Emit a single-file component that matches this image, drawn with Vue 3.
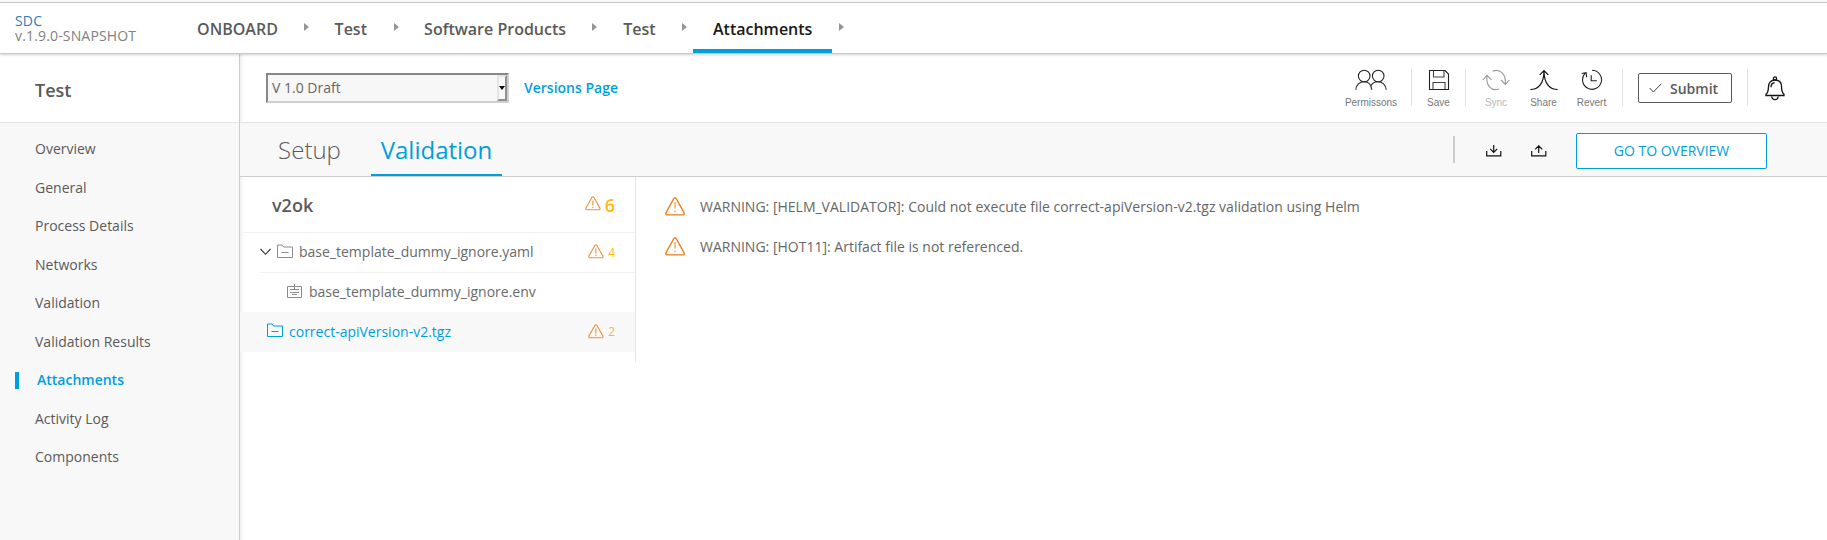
<script setup>
const crumbs = [
  { label: 'ONBOARD', w: 119 },
  { label: 'Test', w: 72 },
  { label: 'Software Products', w: 181 },
  { label: 'Test', w: 72 },
  { label: 'Attachments', w: 139, active: true },
]
const menu = ['Overview', 'General', 'Process Details', 'Networks', 'Validation', 'Validation Results', 'Attachments', 'Activity Log', 'Components']
const warnings = [
  'WARNING: [HELM_VALIDATOR]: Could not execute file correct-apiVersion-v2.tgz validation using Helm',
  'WARNING: [HOT11]: Artifact file is not referenced.',
]
</script>

<template>
  <div class="page">
    <header class="top">
      <div class="brand">
        <a>SDC</a>
        <span>v.1.9.0-SNAPSHOT</span>
      </div>
      <nav class="crumbs">
        <template v-for="(c, i) in crumbs" :key="i">
          <div class="crumb" :class="{ active: c.active }" :style="{ width: c.w + 'px' }">{{ c.label }}</div>
          <i class="sep-arrow"></i>
        </template>
      </nav>
    </header>

    <div class="body">
      <aside class="side">
        <h1>Test</h1>
        <ul>
          <li v-for="m in menu" :key="m" :class="{ active: m === 'Attachments' }">{{ m }}</li>
        </ul>
      </aside>

      <main class="main">
        <div class="toolbar">
          <div class="select"><span>V 1.0 Draft</span><b class="drop"><i></i></b></div>
          <a class="versions">Versions Page</a>
          <div class="actions">
            <div class="act perm">
              <svg width="32" height="22" viewBox="0 0 32 22"><g fill="none" stroke="#222" stroke-width="1.1"><circle cx="9.2" cy="7" r="5.8" /><circle cx="23.2" cy="7" r="5.8" /><path d="M.8 20.800c.3-5 3.900-8 8.200-8s7.400 3 7.700 8M16 16.500c1.500-2.400 4-3.700 7-3.700 4.300 0 7.900 3 8.200 8" /></g></svg>
              <span>Permissons</span>
            </div>
            <i class="line"></i>
            <div class="act save">
              <svg width="22" height="22" viewBox="0 0 22 22"><g fill="none" stroke="#222" stroke-width="1.1"><path d="M1.500 1.500h15.500l3.500 3.500v15.500h-19z" /><path d="M5.500 1.500v6.500h10.500v-6.500M5 20.500v-7h12v7" stroke="#444" /></g></svg>
              <span>Save</span>
            </div>
            <i class="line"></i>
            <div class="act sync">
              <svg width="28" height="22" viewBox="0 0 28 22"><g fill="none" stroke="#999" stroke-width="1.100"><path d="M10.500 2.200C18 -.8 24 5 23.400 15M19 11l4.300 4.500 4-4.500M17 20C9.500 22.500 3.700 17 5 6.500M.8 11L5 6.300l4.500 4.500" /></g></svg>
              <span>Sync</span>
            </div>
            <div class="act share">
              <svg width="28" height="22" viewBox="0 0 28 22"><g fill="none" stroke="#111" stroke-width="1.200"><path d="M.3 20.500C8 20.500 14 15 14 1.800M27.700 20.500C20 20.500 14 15 14 1.800M9.800 5.800L14 1.500l4.200 4.300" /></g></svg>
              <span>Share</span>
            </div>
            <div class="act revert">
              <svg width="22" height="22" viewBox="0 0 22 22"><g fill="none" stroke="#222" stroke-width="1.100"><path d="M11 1.300a9.500 9.500 0 1 1-6.800 2.900M.8 4.500l4.300-.9.500 4.700M10.200 6.200v5.600h5.600" /></g></svg>
              <span>Revert</span>
            </div>
            <i class="line l3"></i>
            <button class="submit">
              <svg width="13" height="10" viewBox="0 0 13 10"><path d="M.6 5l3.800 4L12.300.7" fill="none" stroke="#444" stroke-width="1" /></svg>
              Submit
            </button>
            <i class="line l4"></i>
            <svg class="bell" width="20" height="25" viewBox="0 0 20 25"><g fill="none" stroke="#111" stroke-width="1.300"><path d="M1 18.200c2-1.600 2.400-3.300 2.400-7C3.400 6.500 6 4 10 4s6.600 2.500 6.600 7.200c0 3.700.4 5.400 2.400 7v1.300H1z" /><circle cx="10" cy="2.500" r="1.600" /><path d="M6.700 20.500c.3 2 1.500 3.200 3.300 3.200s3-1.200 3.300-3.200M6 11.200c0-2.500 1.300-4.200 3.600-4.500" /></g></svg>
          </div>
        </div>

        <div class="tabs">
          <div class="tab setup">Setup</div>
          <div class="tab valid">Validation</div>
          <div class="tabtools">
            <i class="bar"></i>
            <svg class="dl" width="16" height="12" viewBox="0 0 16 12"><g fill="none" stroke="#111" stroke-width="1.200"><path d="M.7 6v4.900h14.100V6M7.700 0v7.200M4.200 3.900l3.500 3.500 3.500-3.500" /></g></svg>
            <svg class="ul" width="16" height="12" viewBox="0 0 16 12"><g fill="none" stroke="#111" stroke-width="1.200"><path d="M.7 6v4.900h14.100V6M7.700 8V.9M4.200 4.300L7.700.8l3.500 3.500" /></g></svg>
            <button class="go">GO TO OVERVIEW</button>
          </div>
        </div>

        <div class="content">
          <section class="tree">
            <div class="row head">
              <strong>v2ok</strong>
              <div class="count">
                <svg width="16" height="15" viewBox="0 0 16 15"><g fill="none" stroke="#ee8f35" stroke-width="1.100"><path d="M7 1.300q.9-1 1.800 0l6.200 11q.3 1.200-.9 1.400H1.700Q.5 13.500.8 12.300zM7.900 4.500v5M7.900 10.800v1.200" /></g></svg>
                <b>6</b>
              </div>
            </div>
            <div class="row file parent">
              <svg class="chev" width="11" height="8" viewBox="0 0 11 8"><path d="M.5 1l5 5.300 5-5.300" fill="none" stroke="#333" stroke-width="1.100" /></svg>
              <svg class="ic" width="16" height="14" viewBox="0 0 16 14"><path d="M.5 13.500V1h4.700l1.400 2h8.900v10.500zM4.500 8.500h7" fill="none" stroke="#8c8c8c" /></svg>
              <span>base_template_dummy_ignore.yaml</span>
              <div class="count">
                <svg width="16" height="15" viewBox="0 0 16 15"><g fill="none" stroke="#ee8f35" stroke-width="1.100"><path d="M7 1.300q.9-1 1.800 0l6.200 11q.3 1.200-.9 1.400H1.700Q.5 13.500.8 12.300zM7.900 4.500v5M7.900 10.800v1.200" /></g></svg>
                <em>4</em>
              </div>
            </div>
            <div class="row file child">
              <svg class="ic" width="16" height="14" viewBox="0 0 16 14"><path d="M.5 2.500h14v11H.5zM7.500 0v5M3 5.500h9M3 8.500h9M5 10.500h5" fill="none" stroke="#8c8c8c" /></svg>
              <span>base_template_dummy_ignore.env</span>
            </div>
            <div class="row file selected">
              <svg class="ic" width="16" height="14" viewBox="0 0 16 14"><path d="M.5 13.500V1h4.700l1.400 2h8.900v10.500zM4.500 8.500h7" fill="none" stroke="#009fdb" /></svg>
              <span>correct-apiVersion-v2.tgz</span>
              <div class="count">
                <svg width="16" height="15" viewBox="0 0 16 15"><g fill="none" stroke="#ee8f35" stroke-width="1.100"><path d="M7 1.300q.9-1 1.800 0l6.200 11q.3 1.200-.9 1.400H1.700Q.5 13.500.8 12.300zM7.900 4.500v5M7.900 10.800v1.200" /></g></svg>
                <em>2</em>
              </div>
            </div>
          </section>
          <section class="warns">
            <div v-for="w in warnings" :key="w" class="warn">
              <svg width="20" height="19" viewBox="0 0 20 19"><g fill="none" stroke="#ea7d18" stroke-width="1.300"><path d="M8.900 1.400q1.100-1.300 2.200 0l8.100 14.700q.4 1.500-1.100 1.700H1.900Q.4 17.600.8 16.100z" /><path d="M10 5v6.500M10 13.500v1.800" stroke="#f0a45c" /></g></svg>
              <span>{{ w }}</span>
            </div>
          </section>
        </div>
      </main>
    </div>
  </div>
</template>

<style>
body { margin: 0; overflow: hidden; }
</style>

<style scoped>
* { box-sizing: border-box; }
svg { display: block; flex: none; }
.page { width: 1827px; height: 540px; display: flex; flex-direction: column; background: #fff; color: #5a5a5a; font-family: "Open Sans", "Noto Sans", sans-serif; font-size: 14px; overflow: hidden; }
.top { height: 54px; flex: none; display: flex; background: #fff; border-bottom: 1px solid #c8c8c8; box-shadow: 0 1px 3px rgba(0,0,0,.18), inset 0 2px #f7f7f7, inset 0 3px #c4c4c4; position: relative; z-index: 2; }
.brand { width: 178px; padding: 13px 0 0 15px; line-height: 15px; color: #808080; display: flex; flex-direction: column; letter-spacing: .16px; }
.brand a { color: #337ab7; }
.crumbs { display: flex; align-items: flex-start; }
.crumb { position: relative; height: 53px; padding-top: 4px; line-height: 51px; text-align: center; font-size: 16px; font-weight: 600; white-space: nowrap; }
.crumb.active { color: #191919; }
.crumb.active::after { content: ""; position: absolute; left: 0; right: 0; bottom: 0; height: 4px; background: #009fdb; }
.sep-arrow { margin: 23px 6px 0 6.800px; border-left: 5px solid #959595; border-top: 4.500px solid transparent; border-bottom: 4.500px solid transparent; }
.body { display: flex; flex: 1; }
.side { width: 240px; border-right: 1px solid #ccc; background: #f8f8f8; flex: none; }
.side h1 { margin: 0; height: 69px; padding: 4px 0 0 35px; line-height: 64px; font-size: 18px; font-weight: 600; background: #fff; border-bottom: 1px solid #e5e5e5; }
.side ul { margin: 0; padding: 7px 0 0; list-style: none; }
.side li { height: 38.500px; line-height: 38.500px; padding-left: 35px; }
.side li.active { display: flex; align-items: center; padding-left: 15px; color: #009fdb; font-weight: 600; }
.side li.active::before { content: ""; width: 4px; height: 17px; margin-right: 18px; background: #009fdb; }
.main { flex: 1; display: flex; flex-direction: column; box-shadow: inset 4px 0 4px -3px rgba(0,0,0,.1); }
.toolbar { height: 69px; flex: none; display: flex; align-items: center; border-bottom: 1px solid #e5e5e5; padding-left: 26px; }
.select { width: 243px; height: 30px; border: 2px solid; border-color: #878787 #cfcfcf #cfcfcf #878787; background: #f7f7f7; display: flex; align-items: center; padding-left: 4px; color: #666; }
.select span { margin-top: -2px; }
.drop { margin-left: auto; width: 10px; height: 26px; border: 2px solid; border-color: #e3e3e3 #8f8f8f #8f8f8f #e3e3e3; display: flex; align-items: center; justify-content: center; }
.drop i { border-top: 4px solid #000; border-left: 3px solid transparent; border-right: 3px solid transparent; flex: none; }
.versions { margin: -2px 0 0 15px; color: #009fdb; font-weight: 600; }
.actions { margin-left: auto; display: flex; align-items: center; height: 68px; padding-right: 42px; }
.act { display: flex; flex-direction: column; align-items: center; padding-top: 2px; font: 10px/13px "Liberation Sans", Arial, sans-serif; color: #777; }
.act svg { margin-bottom: 5px; }
.perm { width: 52px; margin-right: 14px; }
.save { width: 53px; }
.sync { width: 60px; color: #bbb; }
.sync span { color: #b8b8b8; }
.share { width: 35px; }
.revert { width: 61px; }
.line { width: 1px; height: 37px; background: #e2e2e2; margin-top: -1px; }
.submit { margin-left: 15px; width: 94px; height: 30px; border: 1px solid #5a5a5a; border-radius: 2px; background: #fff; display: flex; align-items: center; gap: 8px; padding: 0 0 0 10px; color: #5a5a5a; font: 600 14px "Open Sans", sans-serif; }
.l4 { margin-left: 15px; }
.bell { margin-left: 17px; }
.tabs { height: 54px; flex: none; display: flex; background: #f8f8f8; border-bottom: 1px solid #ccc; }
.tab { height: 53px; line-height: 53px; font-size: 24px; font-weight: 300; text-align: center; position: relative; }
.setup { width: 131px; padding-left: 8px; }
.valid { width: 131px; color: #009fdb; font-weight: 400; }
.valid::after { content: ""; position: absolute; left: 0; right: 0; bottom: 0; height: 2px; background: #009fdb; }
.tabtools { margin-left: auto; display: flex; align-items: center; padding-right: 60px; }
.bar { width: 2px; height: 27px; background: #ccc; }
.dl { margin: 3px 0 0 31px; }
.ul { margin: 3px 0 0 29px; }
.go { margin: 2px 0 0 29px; width: 191px; height: 36px; border: 1px solid #009fdb; border-radius: 2px; background: #fff; color: #009fdb; font: 14px "Open Sans", sans-serif; padding: 0; }
.content { display: flex; align-items: flex-start; }
.tree { width: 396px; height: 185px; border-right: 1px solid #e5e5e5; }
.row { display: flex; align-items: center; height: 40px; color: #6a6a6a; }
.file { padding-bottom: 2px; }
.row .count { margin-left: auto; display: flex; align-items: center; padding-right: 20px; color: #ffb81c; }
.head { height: 56px; border-bottom: 1px solid #f2f2f2; padding-left: 32px; }
.head strong { font-size: 18px; font-weight: 600; color: #5a5a5a; }
.head .count b { font-size: 18px; font-weight: 600; width: 14px; text-align: right; }
.head .count svg { margin-top: -2px; }
.count em { font-style: normal; font-size: 12px; width: 11px; text-align: right; margin-top: 1px; }
.parent { margin-left: 20px; border-bottom: 1px solid #f2f2f2; }
.chev { margin-right: 6px; }
.ic { margin: -2px 6px 0 0; }
.child { padding-left: 47px; height: 39px; }
.selected { background: #f8f8f8; padding-left: 27px; color: #009fdb; }
.warns { padding: 9px 0 0 29px; }
.warn { height: 40px; display: flex; align-items: center; gap: 15px; color: #666; }
</style>
